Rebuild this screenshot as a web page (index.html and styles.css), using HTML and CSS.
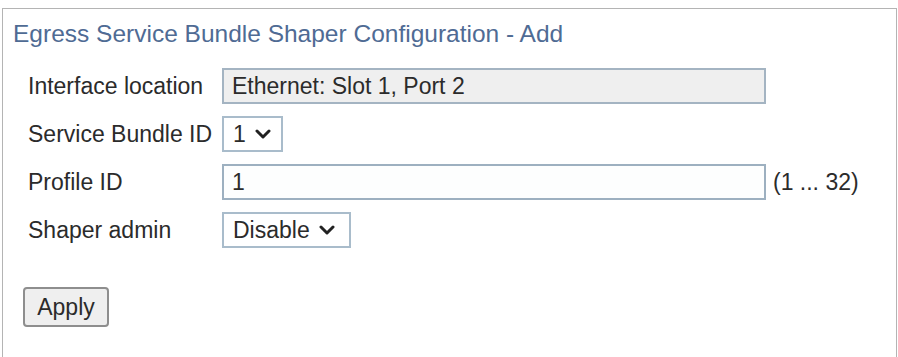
FILE: index.html
```html
<!DOCTYPE html>
<html>
<head>
<meta charset="utf-8">
<link rel="stylesheet" href="styles.css">
</head>
<body>
<div class="panel">
  <div class="title">Egress Service Bundle Shaper Configuration - Add</div>
  <div class="form">
    <div class="label">Interface location</div>
    <div class="ctrl"><div class="input disabled">Ethernet: Slot 1, Port 2</div></div>

    <div class="label">Service Bundle ID</div>
    <div class="ctrl"><div class="select sel-id"><span>1</span><svg class="chev" viewBox="0 0 16 10" width="16" height="10"><path d="M2 2 L8 8 L14 2" fill="none" stroke="#222" stroke-width="3" stroke-linecap="round" stroke-linejoin="round"/></svg></div></div>

    <div class="label">Profile ID</div>
    <div class="ctrl"><div class="input">1</div><span class="hint">(1 ... 32)</span></div>

    <div class="label">Shaper admin</div>
    <div class="ctrl"><div class="select sel-admin"><span>Disable</span><svg class="chev" viewBox="0 0 16 10" width="16" height="10"><path d="M2 2 L8 8 L14 2" fill="none" stroke="#222" stroke-width="3" stroke-linecap="round" stroke-linejoin="round"/></svg></div></div>
  </div>
  <div class="actions"><button class="btn">Apply</button></div>
</div>
</body>
</html>
```
FILE: styles.css
```css
html, body {
  margin: 0;
  padding: 0;
  background: #ffffff;
  overflow: hidden;
}
body {
  font-family: "Liberation Sans", Arial, sans-serif;
  color: #2b2b2b;
  font-size: 23px;
}
.panel {
  margin: 8px 0 0 2px;
  width: 895px;
  height: 349px;
  border: 1px solid #b4b4b4;
  border-bottom: none;
  box-sizing: border-box;
}
.title {
  color: #4f6b94;
  font-size: 24.5px;
  padding: 11px 0 0 10px;
  line-height: 28px;
}
.form {
  display: grid;
  grid-template-columns: 194px 1fr;
  grid-auto-rows: 36px;
  row-gap: 12px;
  margin-top: 20px;
  padding-left: 25px;
  align-items: center;
}
.label {
  line-height: 36px;
}
.ctrl {
  display: flex;
  align-items: center;
  height: 36px;
}
.input {
  box-sizing: border-box;
  width: 544px;
  height: 36px;
  border: 2px solid #9db0c0;
  padding-left: 8px;
  line-height: 32px;
  background: #fdfefe;
}
.input.disabled {
  background: #efefef;
  border-color: #a4b4c2;
}
.hint {
  margin-left: 7px;
}
.select {
  box-sizing: border-box;
  height: 36px;
  border: 2px solid #a9bccb;
  display: flex;
  align-items: center;
  padding-left: 9px;
  gap: 9px;
  background: #fff;
}
.sel-id {
  width: 61px;
}
.sel-admin {
  width: 129px;
}
.chev {
  display: block;
}
.actions {
  padding: 39px 0 0 20px;
}
.btn {
  box-sizing: border-box;
  width: 86px;
  height: 40px;
  font-family: "Liberation Sans", Arial, sans-serif;
  font-size: 23px;
  color: #2b2b2b;
  background: #efefef;
  border: 2px solid #8e8e8e;
  border-radius: 4px;
  padding: 0;
}
```
